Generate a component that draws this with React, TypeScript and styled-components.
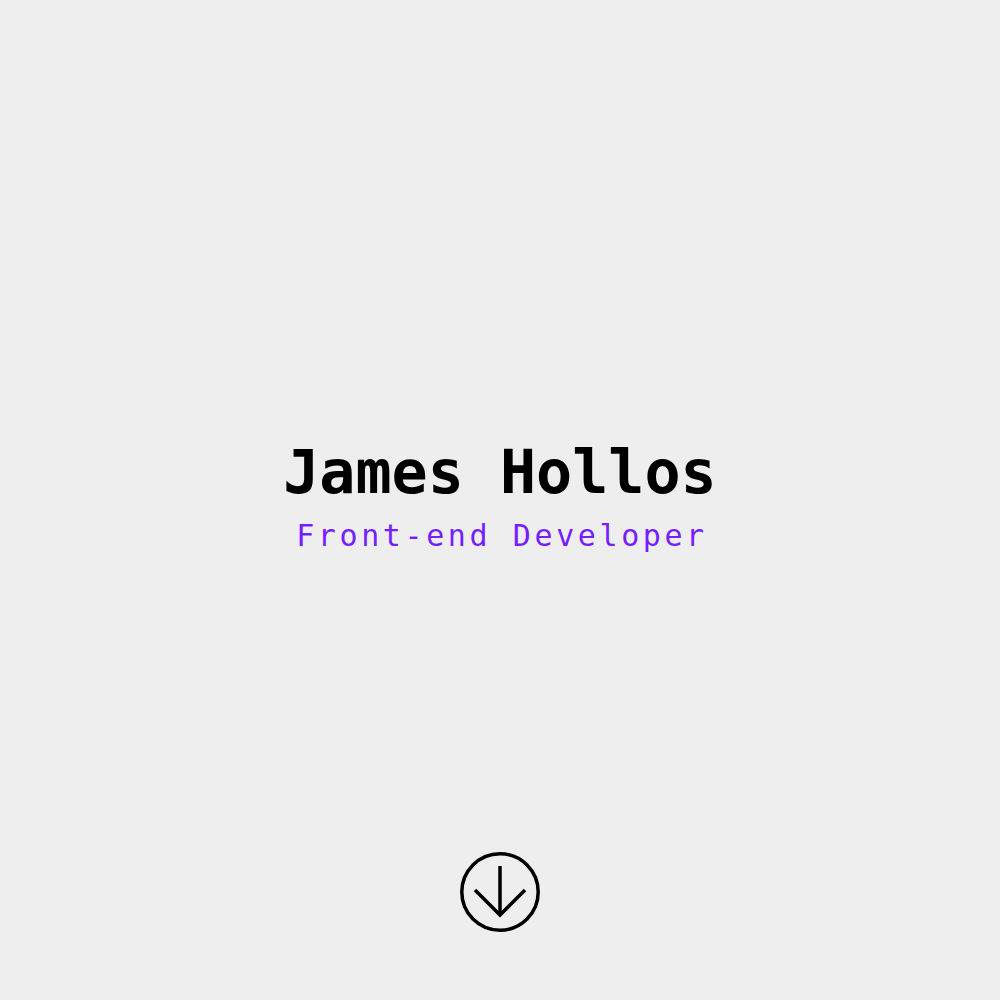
import styled, { createGlobalStyle } from 'styled-components';

const GlobalStyle = createGlobalStyle`
  html,
  body {
    margin: 0;
    padding: 0;
    background-color: #eeeeee;
  }
`;

const Hero = styled.main`
  height: 100vh;
  display: grid;
  grid-template-rows: 1fr auto 1fr;
  justify-items: center;
  font-family: 'DejaVu Sans Mono', 'Liberation Mono', monospace;
`;

const Intro = styled.header`
  grid-row: 2;
  display: flex;
  flex-direction: column;
  align-items: center;
  padding-bottom: 7px;
`;

const Name = styled.h1`
  margin: 0;
  font-size: 60px;
  line-height: 1;
  font-weight: 700;
  color: #000;
`;

const Role = styled.p`
  margin: 19px 0 0 4px;
  font-size: 30px;
  line-height: 1;
  font-weight: 400;
  letter-spacing: 0.12em;
  color: #771eff;
`;

const ScrollLink = styled.a`
  grid-row: 3;
  align-self: end;
  display: block;
  width: 80px;
  height: 80px;
  margin-bottom: 68px;
  color: #000;
`;

const ScrollIcon = () => (
  <svg width="80" height="80" viewBox="0 0 80 80" fill="none" stroke="currentColor" strokeWidth="3.5">
    <circle cx="40" cy="40" r="38.2" />
    <path d="M40 14v49" />
    <path d="M15 38l25 25 25-25" />
  </svg>
);

export default function App() {
  return (
    <>
      <GlobalStyle />
      <Hero>
        <Intro>
          <Name>James Hollos</Name>
          <Role>Front-end Developer</Role>
        </Intro>
        <ScrollLink href="#about" aria-label="Scroll down">
          <ScrollIcon />
        </ScrollLink>
      </Hero>
    </>
  );
}
